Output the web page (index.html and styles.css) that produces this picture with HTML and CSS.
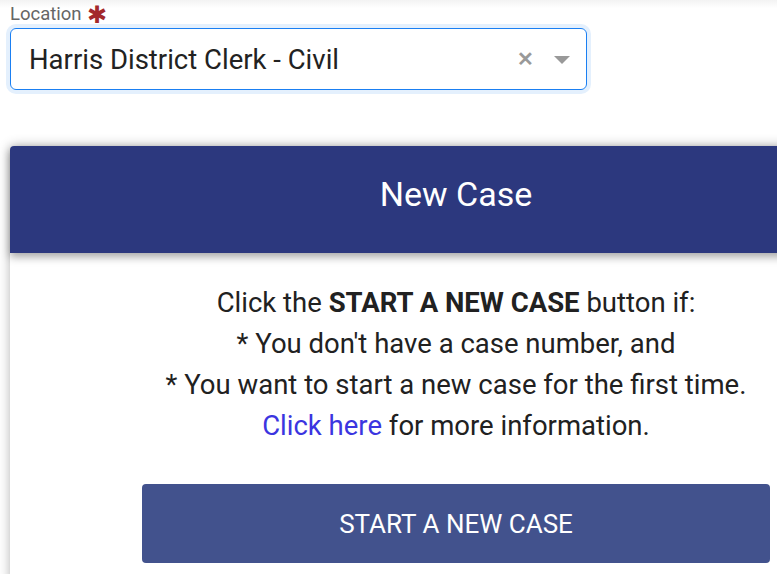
FILE: index.html
```html
<!DOCTYPE html>
<html lang="en">
<head>
    <meta charset="UTF-8">
    <title>New Case</title>
    <link rel="stylesheet" href="styles.css">
</head>
<body>
    <div class="page">
        <div class="field">
            <label class="field-label">Location <span class="req">&#x2731;</span></label>
            <div class="select">
                <span class="select-value">Harris District Clerk - Civil</span>
                <span class="select-clear">&#x2715;</span>
                <span class="select-arrow"></span>
            </div>
        </div>

        <div class="card">
            <div class="card-header">New Case</div>
            <div class="card-body">
                <p class="info">
                    Click the <b>START A NEW CASE</b> button if:<br>
                    * You don't have a case number, and<br>
                    * You want to start a new case for the first time.<br>
                    <a href="#">Click here</a> for more information.
                </p>
                <button type="button" class="start-btn">START A NEW CASE</button>
            </div>
        </div>
    </div>
</body>
</html>
```

FILE: styles.css
```css
body {
    margin: 0;
    font-family: Roboto, "Noto Sans", sans-serif;
    background: linear-gradient(#f3f3f3, #fff 8px);
    color: #212121;
    overflow: hidden;
}

.page {
    padding: 2px 0 0 10px;
    width: 892px;
}

.field-label {
    display: block;
    height: 24px;
    font-size: 18.5px;
    line-height: 24px;
    color: #666666;
    margin-bottom: 2px;
}

.req {
    color: #a3282b;
    font-size: 24px;
    line-height: 10px;
    margin-left: 1px;
    vertical-align: -3px;
}

.select {
    width: 577px;
    height: 62px;
    box-sizing: border-box;
    border: 1px solid #1a7ff2;
    border-radius: 6px;
    box-shadow: 0 0 0 4px #e4f0fd;
    display: flex;
    align-items: center;
    padding: 0 16px 0 18px;
}

.select-value {
    flex: 1;
    font-size: 27.5px;
    color: #222222;
}

.select-clear {
    color: #999999;
    font-size: 20px;
    font-weight: bold;
    margin-right: 20px;
}

.select-arrow {
    width: 0;
    height: 0;
    border-left: 8px solid transparent;
    border-right: 8px solid transparent;
    border-top: 8px solid #999999;
    margin-top: 2px;
}

.card {
    margin-top: 56px;
    background: #fff;
    border-radius: 4px 4px 0 0;
    box-shadow: 0 0 12px rgba(0, 0, 0, 0.3);
}

.card-header {
    background-color: #2c387e;
    color: #fff;
    font-size: 34px;
    height: 107px;
    line-height: 96px;
    text-align: center;
    border-radius: 4px 4px 0 0;
    box-shadow: 0 4px 8px rgba(0, 0, 0, 0.35);
    position: relative;
}

.card-body {
    padding: 29px 0 20px;
    text-align: center;
}

.info {
    margin: 0;
    font-size: 27.5px;
    line-height: 41px;
}

.info a {
    color: #3b35e0;
    text-decoration: none;
}

.start-btn {
    margin-top: 38px;
    width: 628px;
    height: 79px;
    background-color: #42528d;
    color: #fff;
    border: none;
    border-radius: 4px;
    font-family: Roboto, sans-serif;
    font-size: 26px;
    cursor: pointer;
}
```
